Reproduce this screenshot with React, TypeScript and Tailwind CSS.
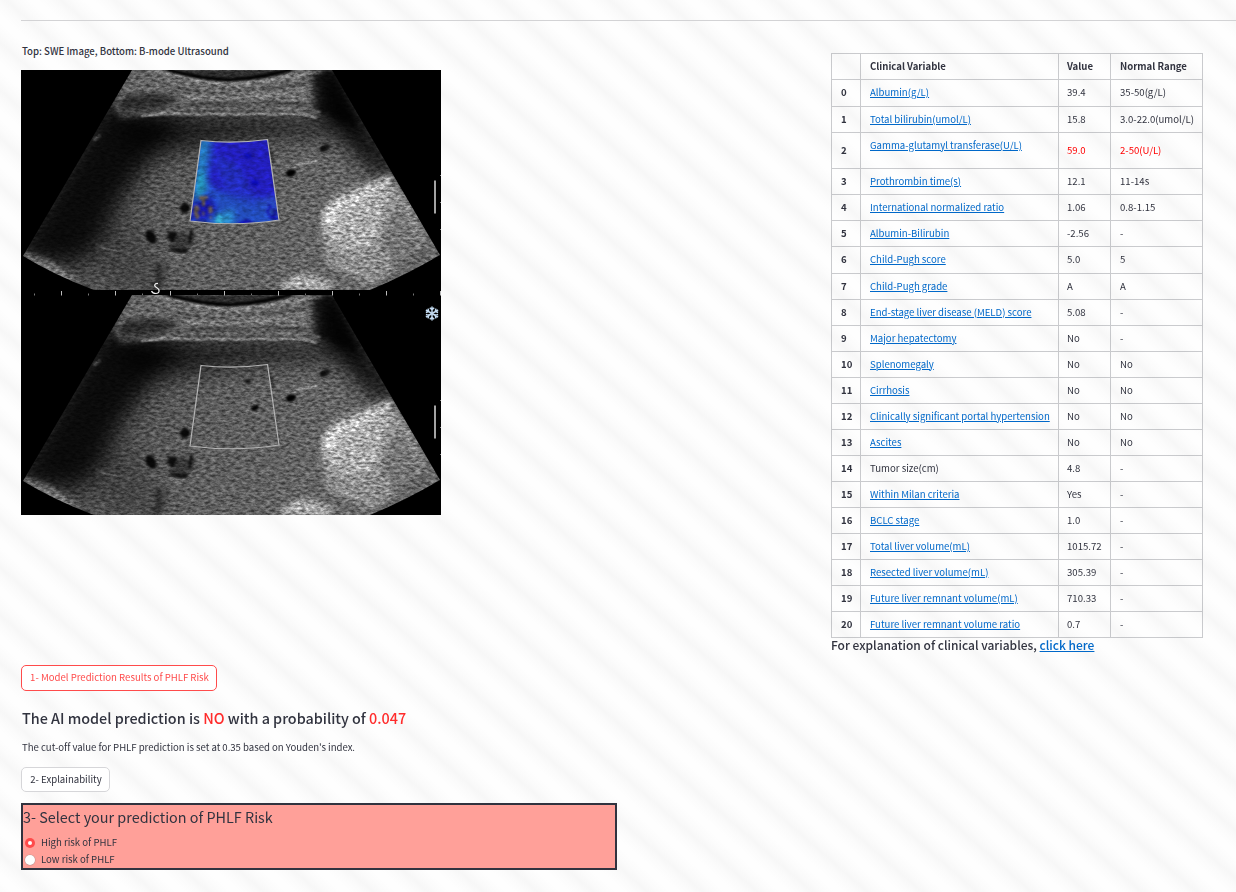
import React from "react";

type Row = { name: string; value: string; range: string; plain?: boolean; alert?: boolean; h?: string };

const rows: Row[] = [
  { name: "Albumin(g/L)", value: "39.4", range: "35-50(g/L)", h: "h-[27px]" },
  { name: "Total bilirubin(umol/L)", value: "15.8", range: "3.0-22.0(umol/L)" },
  { name: "Gamma-glutamyl transferase(U/L)", value: "59.0", range: "2-50(U/L)", alert: true, h: "h-[36px]" },
  { name: "Prothrombin time(s)", value: "12.1", range: "11-14s" },
  { name: "International normalized ratio", value: "1.06", range: "0.8-1.15" },
  { name: "Albumin-Bilirubin", value: "-2.56", range: "-" },
  { name: "Child-Pugh score", value: "5.0", range: "5", h: "h-[27px]" },
  { name: "Child-Pugh grade", value: "A", range: "A" },
  { name: "End-stage liver disease (MELD) score", value: "5.08", range: "-" },
  { name: "Major hepatectomy", value: "No", range: "-" },
  { name: "Splenomegaly", value: "No", range: "No" },
  { name: "Cirrhosis", value: "No", range: "No" },
  { name: "Clinically significant portal hypertension", value: "No", range: "No" },
  { name: "Ascites", value: "No", range: "No" },
  { name: "Tumor size(cm)", value: "4.8", range: "-", plain: true },
  { name: "Within Milan criteria", value: "Yes", range: "-" },
  { name: "BCLC stage", value: "1.0", range: "-" },
  { name: "Total liver volume(mL)", value: "1015.72", range: "-" },
  { name: "Resected liver volume(mL)", value: "305.39", range: "-" },
  { name: "Future liver remnant volume(mL)", value: "710.33", range: "-" },
  { name: "Future liver remnant volume ratio", value: "0.7", range: "-" },
];

const cell = "border-b border-r border-[#31333f]/25 pt-0 pr-0 pb-[2px] text-left";
const link = "text-[#0068c9] underline decoration-1 underline-offset-[1px]";

/* One B-mode sector, 420x220, drawn once and reused for both panels. */
function Sector() {
  return (
    <g clipPath="url(#panel)">
      <g clipPath="url(#fan)">
        <g filter="url(#speckle)">
          <rect width="420" height="220" fill="url(#depth)" />
          <g filter="url(#soft12)">
            <path d="M-10 190 L84 30 L165 46 L135 82 L100 130 L80 170 L58 195Z" fill="#000" opacity=".85" />
            <path d="M95 50 Q200 42 330 50 L330 64 Q200 66 120 90Z" fill="#000" opacity=".7" />
            <path d="M290 0 L315 0 L392 125 L345 95 L308 55Z" fill="#000" opacity=".95" />
            <path d="M60 170 L110 150 L150 220 L90 220Z" fill="#000" opacity=".2" />
          </g>
          <g filter="url(#soft3)">
            <path d="M111 0 L300 0 L300 36 Q200 32 150 39 L100 48 L92 32Z" fill="#626262" opacity=".8" />
            <path d="M98 27 Q130 20 158 27 L146 36 L100 42Z" fill="#0c0c0c" opacity=".65" />
            <path d="M290 0 L315 0 L340 60 L294 40Z" fill="#000" opacity=".75" />
            <path d="M2 182 Q36 192 55 212 L50 215 L2 188Z" fill="#bbb" opacity=".55" />
            <path d="M314 125 Q340 117 370 103 L395 145 L405 175 L350 215 L305 195 Q302 170 299 150 Q302 135 314 125Z" fill="#8c8c8c" opacity=".8" />
            <path d="M300 145 Q340 120 368 118 L372 150 L345 180 L318 180 Q298 160 300 145Z" fill="#b0b0b0" opacity=".6" />
            <path d="M306 135 Q345 115 372 104 L366 114 Q340 128 322 142 L308 162 Q298 145 306 135Z" fill="#d4d4d4" opacity=".6" />
            <path d="M257 219 Q270 202 291 205 L312 214 L310 220Z" fill="#c0c0c0" opacity=".7" />
            <path d="M365 135 L385 145 L410 190 L372 195 Q355 175 365 135Z" fill="#555" opacity=".5" />
            <path d="M133 194 Q139 204 130 220 L140 220 L144 195Z" fill="#050505" opacity=".55" />
            <path d="M146 162 L174 162 L170 181 L150 181Z" fill="#0a0a0a" opacity=".45" />
          </g>
          <g filter="url(#soft1)" fill="none">
            <path d="M128 1 Q155 4 170 9 Q215 19 265 7 L300 2" stroke="#999" strokeWidth="2" opacity=".8" />
            <path d="M150 0 Q215 20 275 0Z" fill="#2a2a2a" />
            <path d="M146 -1 Q170 8 208 10 Q245 8 270 -1" stroke="#000" strokeWidth="3.500" />
            <path d="M100 17 Q125 24 160 14 L250 12" stroke="#888" strokeWidth="1" opacity=".6" />
            <path d="M152 24 Q215 33 292 19" stroke="#999" strokeWidth="1.200" opacity=".8" />
            <path d="M160 31 Q200 24 285 30" stroke="#888" strokeWidth="1" />
            <path d="M156 18 Q200 26 280 14 M165 35 Q220 31 285 34" stroke="#111" strokeWidth="1.200" opacity=".7" />
            <path d="M125 46 Q145 39 175 39 L255 39 Q285 38 300 43" stroke="#909090" strokeWidth="1.200" />
            <path d="M120 46 Q148 42 160 44 L280 44 L296 47" stroke="#b0b0b0" strokeWidth="1.700" />
            <path d="M173 28 L245 34 M175 20 L240 23 M205 15 L280 28" stroke="#888" strokeWidth="1" opacity=".8" />
            <path d="M273 97 Q283 92 296 91" stroke="#999" strokeWidth="2.200" />
            <path d="M75 175 Q82 179 95 180" stroke="#808080" strokeWidth="1.300" opacity=".8" />
            <path d="M149 184 Q155 188 164 184 L172 177" stroke="#aaa" strokeWidth="1.800" opacity=".8" />
            <path d="M73 70 L79 65 M97 30 L104 26" stroke="#999" strokeWidth="2.500" opacity=".5" />
          </g>
          <g fill="#000" filter="url(#soft1)">
            <ellipse cx="270" cy="103" rx="5.300" ry="3.600" transform="rotate(-20 270 103)" />
            <ellipse cx="304" cy="78" rx="6" ry="3.300" transform="rotate(-25 304 78)" opacity=".8" />
            <ellipse cx="164" cy="138" rx="5" ry="5" opacity=".9" />
            <ellipse cx="130" cy="167" rx="4.500" ry="7.500" transform="rotate(-30 130 167)" opacity=".9" />
            <path d="M149 161 L157 163 L152 172 L146 168Z M146 177 Q158 180 170 178 L165 184 Q153 183 146 177Z M169 160 L172 158 L170 174 L167 174Z" opacity=".8" />
            <ellipse cx="234" cy="113" rx="4" ry="2.500" transform="rotate(-20 234 113)" />
            <ellipse cx="227" cy="86" rx="3.500" ry="2.500" transform="rotate(-30 227 86)" opacity=".7" />
            <path d="M249 79 L253 93" stroke="#000" strokeWidth="2" opacity=".6" />
          </g>
        </g>
      </g>
    </g>
  );
}

function Scale() {
  return (
    <g>
      <rect x="413" y="110.500" width="2" height="33" fill="#a3a3a3" />
      <path d="M419 105.500h1M419 132.500h1M419 159.500h1" stroke="#888" />
    </g>
  );
}

function Ultrasound() {
  return (
    <svg width="420" height="445" viewBox="0 0 420 445" className="block bg-black" role="img">
      <defs>
        <clipPath id="panel"><rect width="420" height="220" /></clipPath>
        <clipPath id="fan"><path d="M111 0 H311 L419 185 Q385 205 349 220 H73 Q33 205 2 186Z" /></clipPath>
        <clipPath id="roi"><path d="M180 70.500 Q213 74 246.500 69.500 L258 150 Q214 157 169 151Z" /></clipPath>
        <linearGradient id="depth" x1="0" y1="0" x2="1" y2="0.25">
          <stop offset="0" stopColor="#383838" />
          <stop offset=".3" stopColor="#454545" />
          <stop offset=".55" stopColor="#565656" />
          <stop offset="1" stopColor="#606060" />
        </linearGradient>
        <filter id="soft12" x="-30%" y="-30%" width="160%" height="160%" colorInterpolationFilters="sRGB"><feGaussianBlur stdDeviation="11" /></filter>
        <filter id="soft3" x="-20%" y="-20%" width="140%" height="140%" colorInterpolationFilters="sRGB"><feGaussianBlur stdDeviation="3" /></filter>
        <filter id="soft1" x="-20%" y="-20%" width="140%" height="140%" colorInterpolationFilters="sRGB"><feGaussianBlur stdDeviation=".9" /></filter>
        <filter id="speckle" x="0" y="0" width="420" height="220" filterUnits="userSpaceOnUse" colorInterpolationFilters="sRGB">
          <feTurbulence type="fractalNoise" baseFrequency=".2 .4" numOctaves="3" seed="7" />
          <feColorMatrix values="1.600 0 0 0 -.3  1.600 0 0 0 -.3  1.600 0 0 0 -.3  0 0 0 0 1" result="n" />
          <feComposite in="SourceGraphic" in2="n" operator="arithmetic" k1=".95" k2=".6" />
        </filter>
        <filter id="flow" x="160" y="60" width="110" height="100" filterUnits="userSpaceOnUse" colorInterpolationFilters="sRGB">
          <feTurbulence type="fractalNoise" baseFrequency=".14 .28" numOctaves="3" seed="4" />
          <feColorMatrix values="1.200 0 0 0 -.1  1.200 0 0 0 -.1  1.200 0 0 0 -.1  0 0 0 0 1" result="n" />
          <feComposite in="SourceGraphic" in2="n" operator="arithmetic" k1=".5" k2=".7" />
        </filter>
      </defs>
      <rect width="420" height="445" fill="#000" />
      <Sector />
      <g clipPath="url(#roi)">
        <g filter="url(#flow)">
          <rect x="160" y="60" width="110" height="100" fill="#2420c4" />
          <g filter="url(#soft3)">
            <path d="M178 66 H192 L186 112 L204 128 L196 150 L168 155Z" fill="#2468c4" />
            <path d="M178 70 H186 L180 125 L172 130Z" fill="#2888c4" />
            <path d="M174 105 L184 102 L186 118 L176 130Z" fill="#28a0c4" />
            <path d="M186 116 L212 126 L257 130 V158 H179Z" fill="#2450c4" />
            <path d="M195 145 L213 139 L212 157 H190Z" fill="#2c90cc" />
            <path d="M190 82 L218 96 L240 140 L205 124Z" fill="#2438c4" opacity=".6" />
            <path d="M240 130 L256 125 L258 150 L247 150Z" fill="#2c50c8" />
            <path d="M172 133 L189 125 L196 140 L184 151 L170 150Z" fill="#1818b0" />
          </g>
          <g filter="url(#soft1)">
            <path d="M194 151 L198 143 L202 149 L200 156Z" fill="#38b0d8" />
            <path d="M216 153l10-4 8 4-4 3zM247 148l6-4 4 6z" fill="#1414c0" />
            <ellipse cx="234" cy="113" rx="4" ry="3" fill="#0c0cb0" />
            <ellipse cx="227" cy="86" rx="4" ry="3" fill="#1010b8" />
            <path d="M178 126h9v3h-3v7h-3v-6h-3z M173 136l4-1 2 5-3 2 3 4-3 4-3-6z M187 137l4-1 1 6-4 2z M181 141l3 2-2 4z M188 147l3-1-1 4z" fill="#6a5c50" />
            <path d="M247 134l3 3-4 4 3 5M252 139l3 4-4 4" stroke="#1414a8" strokeWidth="2" fill="none" />
          </g>
        </g>
      </g>
      <path d="M180 70.500 Q213 74 246.500 69.500 L258 150 Q214 157 169 151Z" fill="none" stroke="#b4b4b4" strokeWidth="1.200" />
      <Scale />
      <path d="M13.500 223.500v2M67.500 223.500v2M121.500 223.500v2M176.500 223.500v2M230.500 223.500v2M284.500 223.500v2M338.500 223.500v2M392.500 223.500v2" stroke="#777" />
      <g transform="translate(0 225)">
        <Sector />
        <path d="M180 70.500 Q213 74 246.500 69.500 L258 150 Q214 157 169 151Z" fill="none" stroke="#b4b4b4" strokeWidth="1.200" />
        <Scale />
      </g>
      <path d="M40.500 221v4.500M94.500 221v4.500M149.500 221v4.500M203.500 221v4.500M257.500 221v4.500M311.500 221v4.500M365.500 221v4.500M419.500 221v4.500" stroke="#bbb" />
      <path d="M137 213.500 C133.500 213 132.500 216 135.500 217.500 C139.500 219.500 138.500 223.500 135 223.500 Q131.500 223.500 130.500 221" fill="none" stroke="#eee" strokeWidth="1.200" />
      <g transform="translate(411 243.500)" stroke="#c3daf0" strokeWidth="1.500" fill="none">
        <g id="arm"><path d="M0 -7V7M-2.200 -5.800L0 -3.800L2.200 -5.800M-2.200 5.800L0 3.800L2.200 5.800" /></g>
        <use href="#arm" transform="rotate(60)" />
        <use href="#arm" transform="rotate(120)" />
      </g>
    </svg>
  );
}

function Radio({ label, checked }: { label: string; checked?: boolean }) {
  return (
    <label className="flex h-[17px] items-center gap-[6px] pl-[2px]">
      <span className={checked ? "flex size-[10px] items-center justify-center rounded-full bg-[#ff4b4b]" : "size-[10px] rounded-full bg-white shadow-[0_0_0_0.5px_#8888]"}>
        {checked && <span className="size-[4px] rounded-full bg-white" />}
      </span>
      <span className="pb-[1px]">{label}</span>
    </label>
  );
}

export default function App() {
  return (
    <div className="h-[892px] w-[1236px] overflow-hidden bg-white bg-[repeating-linear-gradient(41deg,#fbfbfb_0px,#fefefe_8px,#fefefe_14px,#fbfbfb_22px,#f7f7f7_29px,#fbfbfb_36px)] pl-[21px] pt-[20px] font-['Noto_Sans_CJK_SC',sans-serif] text-[9.6px] leading-[16px] whitespace-nowrap text-[#31333f]">
      <hr className="h-px border-0 bg-[#d3d3d5]" />
      <main className="flex">
        <section className="flex w-[596px] flex-col items-start">
          <p className="mt-[22px] h-[27px] pl-px font-medium">Top: SWE Image, Bottom: B-mode Ultrasound</p>
          <Ultrasound />
          <button className="mt-[150px] flex h-[26px] w-[196px] items-center justify-center rounded-[5px] border border-[#ff4b4b] bg-white pb-[2px] pl-px text-[#ff4b4b]">
            1- Model Prediction Results of PHLF Risk
          </button>
          <h3 className="mt-[15px] h-[25px] pl-px text-[14.4px] leading-[24px] font-medium tracking-[-0.015px]">
            The AI model prediction is <span className="text-[#ff2b2b]">NO</span> with a probability of <span className="text-[#ff2b2b]">0.047</span>
          </h3>
          <p className="mt-[8px] h-[16px] pl-px tracking-[-0.02px]">The cut-off value for PHLF prediction is set at 0.35 based on Youden's index.</p>
          <button className="mt-[12px] flex h-[25px] w-[89px] items-center justify-center rounded-[5px] border border-[#d6d6d9] bg-white pb-[2px] pl-px">
            2- Explainability
          </button>
          <div className="mt-[11px] h-[67px] w-full border-2 border-[#31333f] bg-[#ffa099]">
            <h4 className="h-[29px] text-[14.4px] leading-[23px]">3- Select your prediction of PHLF Risk</h4>
            <Radio label="High risk of PHLF" checked />
            <Radio label="Low risk of PHLF" />
          </div>
        </section>
        <section className="ml-[214px] w-[372px] pt-[32px]">
          <table className="w-[372px] table-fixed border-separate border-spacing-0 border-t border-l border-[#31333f]/25">
            <colgroup>
              <col className="w-[29px]" />
              <col className="w-[198px]" />
              <col className="w-[52px]" />
              <col className="w-[92px]" />
            </colgroup>
            <thead>
              <tr className="h-[26px]">
                <th className={cell} />
                <th className={`${cell} pl-[9px] font-bold`}>Clinical Variable</th>
                <th className={`${cell} pl-[8px] font-bold`}>Value</th>
                <th className={`${cell} pl-[9px] font-bold`}>Normal Range</th>
              </tr>
            </thead>
            <tbody>
              {rows.map((r, i) => (
                <tr key={r.name} className={r.h ?? "h-[26px]"}>
                  <th className={`${cell} pl-[9px] font-bold`}>{i}</th>
                  <td className={`${cell} pl-[9px]`}>
                    {r.plain ? r.name : <a className={link}>{r.name}</a>}
                    {r.alert && <div className="h-[10px]" />}
                  </td>
                  <td className={r.alert ? `${cell} pl-[8px] text-[#ff0000]` : `${cell} pl-[8px]`}>{r.value}</td>
                  <td className={r.alert ? `${cell} pl-[9px] text-[#ff0000]` : `${cell} pl-[9px]`}>{r.range}</td>
                </tr>
              ))}
            </tbody>
          </table>
          <p className="-mt-px text-[12px] font-medium">
            For explanation of clinical variables, <a className={link}>click here</a>
          </p>
        </section>
      </main>
    </div>
  );
}
